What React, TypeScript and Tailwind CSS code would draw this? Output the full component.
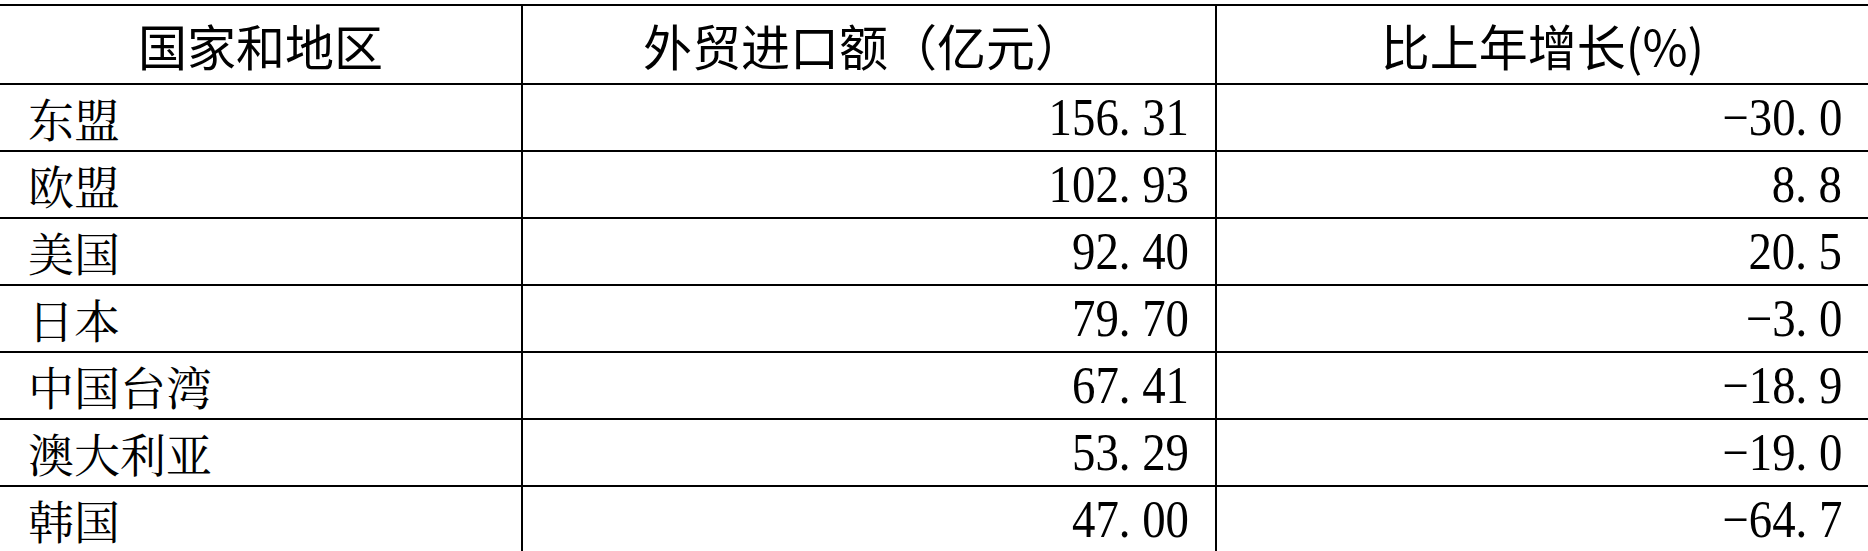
const rows = [
  { name: "东盟", amount: "156.31", growth: "−30.0" },
  { name: "欧盟", amount: "102.93", growth: "8.8" },
  { name: "美国", amount: "92.40", growth: "20.5" },
  { name: "日本", amount: "79.70", growth: "−3.0" },
  { name: "中国台湾", amount: "67.41", growth: "−18.9" },
  { name: "澳大利亚", amount: "53.29", growth: "−19.0" },
  { name: "韩国", amount: "47.00", growth: "−64.7" },
];

const cjk = "font-['Noto_Serif_CJK_SC','Noto_Sans_CJK_SC',serif]";
const head = "font-['Noto_Sans_CJK_SC',sans-serif]";

// half-width, song-style digits: narrow serif with a full-cell period
function Num({ value }: { value: string }) {
  return (
    <span className="inline-block origin-right scale-x-90 font-['Liberation_Serif',serif] text-[52px] leading-none">
      {value.split("").map((ch, i) =>
        ch === "." ? (
          <span key={i} className="inline-block w-[0.5em]">
            .
          </span>
        ) : (
          <span key={i}>{ch}</span>
        )
      )}
    </span>
  );
}

export default function App() {
  return (
    <div className="h-[551px] w-[1868px] overflow-hidden bg-white pt-[4px] text-black">
      <div className="grid grid-cols-[523px_694px_1fr] border-t-2 border-black">
        <div className={`flex h-[79px] items-center justify-center border-r-2 border-b-2 border-black text-[49px] ${head}`}>
          国家和地区
        </div>
        <div className={`flex h-[79px] items-center justify-center border-r-2 border-b-2 border-black pr-[11px] text-[49px] ${head}`}>
          外贸进口额（亿元）
        </div>
        <div className={`flex h-[79px] items-center justify-center border-b-2 border-black text-[49px] ${head}`}>
          比上年增长(%)
        </div>

        {rows.map((r) => (
          <div key={r.name} className="contents">
            <div className={`flex h-[67px] items-center border-r-2 border-b-2 border-black pl-[28px] text-[46px] ${cjk}`}>
              {r.name}
            </div>
            <div className="flex h-[67px] items-center justify-end border-r-2 border-b-2 border-black pr-[26px]">
              <Num value={r.amount} />
            </div>
            <div className="flex h-[67px] items-center justify-end border-b-2 border-black pr-[26px]">
              <Num value={r.growth} />
            </div>
          </div>
        ))}
      </div>
    </div>
  );
}
